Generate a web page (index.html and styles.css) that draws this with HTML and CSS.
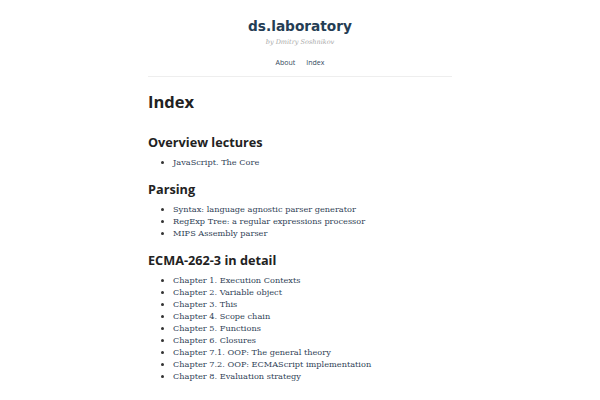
FILE: index.html
```html
<!DOCTYPE html>
<html>
<head>
<meta charset="utf-8">
<link rel="stylesheet" href="styles.css">
</head>
<body>
<div class="page">
  <header class="site-header">
    <div class="site-title">ds.laboratory</div>
    <div class="site-author">by Dmitry Soshnikov</div>
    <nav class="site-nav">
      <a href="#">About</a>
      <a href="#">Index</a>
    </nav>
  </header>
  <main class="content">
    <h1 class="page-title">Index</h1>
    <h2 class="section-title">Overview lectures</h2>
    <ul class="links">
      <li><a href="#">JavaScript. The Core</a></li>
    </ul>
    <h2 class="section-title">Parsing</h2>
    <ul class="links">
      <li><a href="#">Syntax: language agnostic parser generator</a></li>
      <li><a href="#">RegExp Tree: a regular expressions processor</a></li>
      <li><a href="#">MIPS Assembly parser</a></li>
    </ul>
    <h2 class="section-title">ECMA-262-3 in detail</h2>
    <ul class="links">
      <li><a href="#">Chapter 1. Execution Contexts</a></li>
      <li><a href="#">Chapter 2. Variable object</a></li>
      <li><a href="#">Chapter 3. This</a></li>
      <li><a href="#">Chapter 4. Scope chain</a></li>
      <li><a href="#">Chapter 5. Functions</a></li>
      <li><a href="#">Chapter 6. Closures</a></li>
      <li><a href="#">Chapter 7.1. OOP: The general theory</a></li>
      <li><a href="#">Chapter 7.2. OOP: ECMAScript implementation</a></li>
      <li><a href="#">Chapter 8. Evaluation strategy</a></li>
    </ul>
  </main>
</div>
</body>
</html>
```
FILE: styles.css
```css
html, body {
  margin: 0;
  padding: 0;
  background: #fff;
}
body {
  font-family: "DejaVu Serif", serif;
  color: #333;
}
.page {
  width: 304px;
  margin: 0 auto;
}
.site-header {
  text-align: center;
  padding-top: 16px;
  padding-bottom: 8px;
  border-bottom: 1px solid #eeeeee;
}
.site-title {
  font-family: "DejaVu Sans", sans-serif;
  font-weight: bold;
  font-size: 13.7px;
  line-height: 20px;
  color: #253d54;
}
.site-author {
  font-family: "DejaVu Serif", serif;
  font-style: italic;
  font-size: 6.5px;
  line-height: 10px;
  margin-top: 1px;
  color: #a8a8a8;
}
.site-nav {
  display: flex;
  justify-content: center;
  gap: 11px;
  margin-top: 11px;
  font-family: "Open Sans", sans-serif;
  font-size: 7px;
  line-height: 10px;
}
.site-nav a {
  color: #34495e;
  text-decoration: none;
}
.content {
  padding-top: 15px;
}
.page-title {
  font-family: "Open Sans", sans-serif;
  font-weight: bold;
  font-size: 16.5px;
  line-height: 20px;
  margin: 0 0 22px;
  color: #222;
}
.section-title {
  font-family: "Open Sans", sans-serif;
  font-weight: bold;
  font-size: 12.7px;
  line-height: 16px;
  margin: 0 0 6px;
  color: #222;
}
.links {
  margin: 0 0 13px;
  padding-left: 25px;
  font-size: 8.2px;
  line-height: 12px;
}
.links a {
  color: #2f4256;
  text-decoration: none;
}
```
